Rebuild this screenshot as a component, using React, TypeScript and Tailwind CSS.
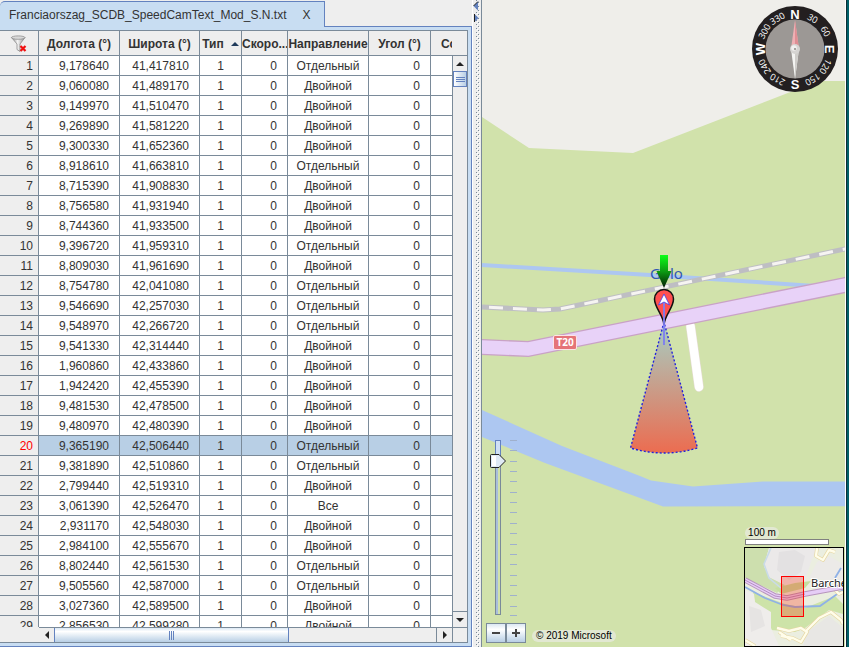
import React, { useState } from "react";

type Row = [string, string, string];

const DATA: Row[] = [
  ["9,178640", "41,417810", "Отдельный"],
  ["9,060080", "41,489170", "Двойной"],
  ["9,149970", "41,510470", "Двойной"],
  ["9,269890", "41,581220", "Двойной"],
  ["9,300330", "41,652360", "Двойной"],
  ["8,918610", "41,663810", "Отдельный"],
  ["8,715390", "41,908830", "Двойной"],
  ["8,756580", "41,931940", "Двойной"],
  ["8,744360", "41,933500", "Двойной"],
  ["9,396720", "41,959310", "Отдельный"],
  ["8,809030", "41,961690", "Двойной"],
  ["8,754780", "42,041080", "Отдельный"],
  ["9,546690", "42,257030", "Отдельный"],
  ["9,548970", "42,266720", "Отдельный"],
  ["9,541330", "42,314440", "Двойной"],
  ["1,960860", "42,433860", "Двойной"],
  ["1,942420", "42,455390", "Двойной"],
  ["9,481530", "42,478500", "Двойной"],
  ["9,480970", "42,480390", "Двойной"],
  ["9,365190", "42,506440", "Отдельный"],
  ["9,381890", "42,510860", "Отдельный"],
  ["2,799440", "42,519310", "Двойной"],
  ["3,061390", "42,526470", "Все"],
  ["2,931170", "42,548030", "Двойной"],
  ["2,984100", "42,555670", "Двойной"],
  ["8,802440", "42,561530", "Отдельный"],
  ["9,505560", "42,587000", "Отдельный"],
  ["3,027360", "42,589500", "Двойной"],
  ["2,856530", "42,599280", "Двойной"],
];

const TH = "border-r border-b border-[#7a8a99] p-0 pt-px text-center font-bold overflow-hidden whitespace-nowrap";
const TD = "border-r border-b border-[#7a8a99] p-0";

function FilterIcon() {
  return (
    <svg width="18" height="18" viewBox="0 0 18 18" aria-hidden="true">
      <defs>
        <linearGradient id="funnel" x1="0" x2="1">
          <stop offset="0" stopColor="#8a8a8a" />
          <stop offset=".45" stopColor="#f4f4f4" />
          <stop offset="1" stopColor="#8f8f8f" />
        </linearGradient>
      </defs>
      <path d="M1.5 2.5 L7 9 V14.5 L10 16.5 V9 L15 2.5Z" fill="url(#funnel)" stroke="#8a8a8a" strokeWidth=".8" />
      <ellipse cx="8.2" cy="2.6" rx="6.8" ry="1.7" fill="#d9d9d9" stroke="#8f8f8f" strokeWidth=".8" />
      <path d="M10.5 11 L15.5 16 M15.5 11 L10.5 16" stroke="#f01010" strokeWidth="2.2" />
    </svg>
  );
}

function DataTable() {
  const [selected, setSelected] = useState(19);
  return (
    <table className="w-[490px] table-fixed border-separate border-spacing-0 text-[12px] leading-4 text-[#333]">
      <colgroup>
        <col className="w-[39px]" />
        <col className="w-[81px]" />
        <col className="w-[80px]" />
        <col className="w-[42px]" />
        <col className="w-[46px]" />
        <col className="w-[81px]" />
        <col className="w-[62px]" />
        <col />
      </colgroup>
      <thead>
        <tr className="h-[25px] bg-[#eee]">
          <th className={TH}>
            <button aria-label="Сбросить фильтр" className="flex h-[23px] w-full items-center justify-center">
              <FilterIcon />
            </button>
          </th>
          <th className={TH}>Долгота (°)</th>
          <th className={TH}>Широта (°)</th>
          <th className={TH}>
            <span className="flex items-center justify-center gap-[7px]">
              Тип
              <svg width="8" height="4" viewBox="0 0 8 4" aria-hidden="true">
                <path d="M0 4 L4 0 L8 4Z" fill="#1f3a5a" />
              </svg>
            </span>
          </th>
          <th className={TH}>Скоро...</th>
          <th className={TH}>Направление</th>
          <th className={TH}>Угол (°)</th>
          <th className="overflow-hidden border-b border-[#7a8a99] p-0 pt-px pl-[10px] text-left font-bold">Сс</th>
        </tr>
      </thead>
      <tbody>
        {DATA.map(([lon, lat, dir], i) => (
          <tr key={lat} onClick={() => setSelected(i)} className={i === selected ? "h-5 bg-[#b8cfe5]" : "h-5 bg-white"}>
            <th
              scope="row"
              className={`${TD} bg-[#eee] pr-[5px] text-right font-normal ${i === selected ? "text-[#ff0000]" : ""}`}
            >
              {i + 1}
            </th>
            <td className={`${TD} pr-[10px] text-right`}>{lon}</td>
            <td className={`${TD} pr-[10px] text-right`}>{lat}</td>
            <td className={`${TD} text-center`}>1</td>
            <td className={`${TD} pr-[10px] text-right`}>0</td>
            <td className={`${TD} text-center`}>{dir}</td>
            <td className={`${TD} pr-[10px] text-right`}>0</td>
            <td className={TD}></td>
          </tr>
        ))}
      </tbody>
    </table>
  );
}

function Arrow({ d }: { d: string }) {
  return (
    <svg width="8" height="8" viewBox="0 0 8 8" aria-hidden="true">
      <path d={d} fill="#222" />
    </svg>
  );
}

function VerticalScroll() {
  return (
    <div className="flex w-[15px] shrink-0 flex-col bg-[#eee]">
      <div className="h-[25px] border-b border-[#7a8a99]" />
      <div className="flex flex-1 flex-col border-l border-[#7a8a99]">
        <button aria-label="Вверх" className="flex h-[15px] items-center justify-center">
          <Arrow d="M0 6 L4 2 L8 6Z" />
        </button>
        <div className="flex h-4 flex-col items-center justify-center gap-px border border-[#6382bf] bg-linear-to-r from-white to-[#b8cfe5]">
          <i className="h-px w-[9px] bg-[#6382bf]" />
          <i className="h-px w-[9px] bg-[#6382bf]" />
          <i className="h-px w-[9px] bg-[#6382bf]" />
        </div>
        <div className="flex-1" />
        <button aria-label="Вниз" className="flex h-4 items-center justify-center border-t border-[#7a8a99]">
          <Arrow d="M0 2 L4 6 L8 2Z" />
        </button>
      </div>
    </div>
  );
}

function HorizontalScroll() {
  return (
    <div className="flex h-[15px] shrink-0 bg-[#eee]">
      <div className="w-[39px]" />
      <div className="flex flex-1 border-t border-[#7a8a99]">
        <button aria-label="Влево" className="flex w-[15px] items-center justify-center">
          <Arrow d="M6 0 L2 4 L6 8Z" />
        </button>
        <div className="flex w-[235px] items-center justify-center gap-px border-x border-[#6382bf] bg-linear-to-b from-[#dce8f4] via-white via-25% to-[#b8cfe5]">
          <i className="h-[9px] w-px bg-[#6382bf]" />
          <i className="h-[9px] w-px bg-[#6382bf]" />
          <i className="h-[9px] w-px bg-[#6382bf]" />
        </div>
        <div className="flex-1" />
        <button aria-label="Вправо" className="flex w-4 items-center justify-center border-l border-[#7a8a99]">
          <Arrow d="M2 0 L6 4 L2 8Z" />
        </button>
        <div className="w-[15px] border-l border-[#7a8a99]" />
      </div>
    </div>
  );
}

function FilePane() {
  return (
    <section className="flex w-[472px] shrink-0 flex-col bg-[#eee]">
      <div className="flex h-[27px] shrink-0 items-stretch pt-px">
        <div className="flex w-[325px] items-center rounded-tl-[5px] border-t border-r border-[#6382bf] bg-[#c8ddf2] pl-[9px] text-[12px] leading-4 text-[#333]">
          <span className="whitespace-nowrap">Franciaorszag_SCDB_SpeedCamText_Mod_S.N.txt</span>
          <button aria-label="Закрыть вкладку" className="ml-4">
            X
          </button>
        </div>
        <div className="flex-1 border-b border-[#6382bf]" />
      </div>
      <div className="flex min-h-0 flex-1 flex-col border-r border-b border-[#6382bf] bg-[#c8ddf2] pt-[3px] pr-[3px] pb-[3px]">
        <div className="flex min-h-0 flex-1 flex-col border-t border-r border-b border-[#7a8a99] bg-[#eee]">
          <div className="flex min-h-0 flex-1">
            <div className="min-w-0 flex-1 overflow-hidden">
              <DataTable />
            </div>
            <VerticalScroll />
          </div>
          <HorizontalScroll />
        </div>
      </div>
    </section>
  );
}

function Splitter() {
  return (
    <div className="w-[9px] shrink-0 bg-[#eee]">
      <svg width="9" height="100%" className="block" aria-hidden="true">
        <defs>
          <pattern id="grip" width="4" height="4" patternUnits="userSpaceOnUse">
            <rect x="0" y="0" width="1" height="1" fill="#7a8a99" />
            <rect x="2" y="2" width="1" height="1" fill="#7a8a99" />
            <rect x="1" y="1" width="1" height="1" fill="#fff" />
            <rect x="3" y="3" width="1" height="1" fill="#fff" />
          </pattern>
        </defs>
        <rect width="1" height="100%" fill="#fff" />
        <rect x="4" y="0" width="4" height="100%" fill="url(#grip)" />
        <path d="M6 1.5 L1.5 6 L6 10.5Z" fill="#6382bf" />
        <path d="M6 1.5 L1.5 6" stroke="#222" fill="none" />
        <path d="M2.5 14 L6.5 18 L2.5 22Z" fill="#6382bf" />
        <path d="M2.5 14 V22" stroke="#222" />
      </svg>
    </div>
  );
}

const ROAD = "470,347 482,347 528,349 845,285 1400,173";
const RAIL = "482,307 543,310 560,309 845,249 1400,132";

function MapDrawing() {
  return (
    <svg
      className="absolute inset-0 h-full w-full"
      viewBox="482 0 363 647"
      preserveAspectRatio="xMinYMin slice"
      role="img"
      aria-label="Карта"
    >
      <defs>
        <linearGradient id="cone" x1="0" y1="0" x2="0" y2="1">
          <stop offset="0" stopColor="#a5cfc4" />
          <stop offset="1" stopColor="#ec6c50" />
        </linearGradient>
        <linearGradient id="green" x1="0" y1="0" x2="0" y2="1">
          <stop offset="0" stopColor="#0cff18" />
          <stop offset=".5" stopColor="#0b9a12" />
          <stop offset="1" stopColor="#041a04" />
        </linearGradient>
      </defs>
      <rect x="482" width="1000" height="1000" fill="#d1e2ab" />
      <path d="M482 0 V117 L529 148 L633 153 L793 91 L823 81 H1400 V0Z" fill="#efeeea" />
      <path
        d="M482 410 L562 446 L640 476 L651 480.5 L693 486.5 L763 481.5 L1400 481 V505 L663 506.5 L545 463 L482 437Z"
        fill="#adc7f1"
      />
      <path d="M482 265 L650 275 L770 283 L815 286" stroke="#adc7f1" strokeWidth="4" fill="none" />
      <polyline points={RAIL} stroke="#bebec3" strokeWidth="5" fill="none" />
      <polyline points={RAIL} stroke="#f6f4f2" strokeWidth="3" fill="none" strokeDasharray="14 10" strokeDashoffset="-7" />
      <text x="650" y="279" fontSize="15" fill="#3057b4" className="font-['Noto_Sans',sans-serif]">
        Golo
      </text>
      <path d="M690.5 326 L699 387" stroke="#e6dcd6" strokeWidth="9.5" strokeLinecap="round" />
      <path d="M690.5 326 L699 387" stroke="#fff" strokeWidth="8.5" strokeLinecap="round" />
      <polyline points={ROAD} stroke="#c9a2c6" strokeWidth="16" fill="none" />
      <polyline points={ROAD} stroke="#e8d2f8" strokeWidth="13.4" fill="none" />
      <rect x="553.5" y="335.5" width="23" height="14" rx="1.5" fill="#e57478" stroke="#fbe4e6" />
      <text x="565" y="346" fontSize="10" fontWeight="bold" fill="#fff" textAnchor="middle" className="font-['Noto_Sans',sans-serif]">
        T20
      </text>
      <path
        d="M664 322 L630.5 448 Q664 458 697.5 448Z"
        fill="url(#cone)"
        stroke="#2222dd"
        strokeWidth="1.4"
        strokeDasharray="2 2"
      />
      <path
        d="M664 325 C663.5 315 654.5 308 654.5 299 A9.3 9.3 0 0 1 673.5 299 C673.5 308 664.5 315 664 325Z"
        fill="#ff5050"
        stroke="#111"
        strokeWidth="1.5"
      />
      <path d="M664 302 V345" stroke="#7d7df2" strokeWidth="1.8" />
      <path d="M664 294 L669.5 305 L664 302 L658.5 305Z" fill="#fff" stroke="#3d3df0" strokeWidth=".8" />
      <path d="M660 255 H668 V271 H671.5 L664 288 L656.5 271 H660Z" fill="url(#green)" />
    </svg>
  );
}

const DEGREES = [30, 60, 120, 150, 210, 240, 300, 330];

function Compass() {
  return (
    <svg width="86" height="86" viewBox="-43 -43 86 86" className="absolute top-1.5 right-[7px]" role="img" aria-label="Компас">
      <circle r="43" fill="#231f20" />
      <circle r="29.5" fill="#9c9895" />
      <g fill="#fff" textAnchor="middle" className="font-['Open_Sans',sans-serif]">
        {DEGREES.map((a) => (
          <text key={a} y="-32" fontSize="9" fontWeight="500" transform={`rotate(${a})`}>
            {a}
          </text>
        ))}
        <g fontSize="13" fontWeight="bold" className="font-['Liberation_Sans',sans-serif]">
          <text y="-30">N</text>
          <text y="-30" transform="rotate(90)">E</text>
          <text y="39.5">S</text>
          <text y="-30" transform="rotate(-90)">W</text>
        </g>
      </g>
      <path d="M0 -29 L4 0 H-4Z" fill="#eeb0b4" />
      <path d="M0 -29 L4 0 H0Z" fill="#df8e94" />
      <path d="M0 30 L4 0 H-4Z" fill="#f4f4f2" />
      <path d="M0 30 L4 0 H0Z" fill="#cfcdca" />
      <circle r="5" fill="#d6d4d2" />
      <circle cx="-1" cy="-1" r="2.8" fill="#f1f0ef" />
      <circle r="1" fill="#8b8885" />
    </svg>
  );
}

const TICKS = [0, 10, 21, 31, 41, 52, 62, 72, 83, 93, 104, 114, 124, 135, 145, 155, 166, 175];

function ZoomControl() {
  const [zoom, setZoom] = useState(16);
  const button =
    "flex size-5 items-center justify-center border border-[#7a8a99] bg-linear-to-b from-[#dce8f3] via-white via-30% to-[#b8cfe5]";
  return (
    <div className="absolute bottom-1 left-1 w-10">
      <div className="relative mb-[7px] h-[177px]">
        <svg width="40" height="177" viewBox="0 0 40 177" className="block" aria-hidden="true">
          <rect x="9.5" y="1.5" width="5" height="174" fill="#d1e2ab" stroke="#7a8a99" />
          <rect x="10" y="2" width="2" height="173" fill="#a9bedb" />
          <rect x="9.5" y="1.5" width="5" height="20" fill="#cfe0f5" stroke="#6382bf" />
          {TICKS.map((t) => (
            <path key={t} d={`M24 ${t + 1.5} h7`} stroke="#9fb0cc" />
          ))}
          <path d="M5.5 15.5 H13 L19.5 22 L13 28.5 H5.5 Q4.5 28.5 4.5 27.5 V16.5 Q4.5 15.5 5.5 15.5Z" fill="#dfeaf5" stroke="#222" />
          <path d="M6 17 H10 V27 H6Z" fill="#fff" />
        </svg>
        <input
          type="range"
          min="1"
          max="18"
          value={zoom}
          onChange={(e) => setZoom(Number(e.target.value))}
          aria-label="Масштаб"
          className="absolute inset-y-0 left-1 w-4 cursor-pointer opacity-0 [direction:rtl] [writing-mode:vertical-lr]"
        />
      </div>
      <div className="flex">
        <button aria-label="Уменьшить" className={button} onClick={() => setZoom(zoom - 1)}>
          <svg width="10" height="10" viewBox="0 0 10 10">
            <path d="M1 5 H9" stroke="#444" strokeWidth="2" />
          </svg>
        </button>
        <button aria-label="Увеличить" className={button} onClick={() => setZoom(zoom + 1)}>
          <svg width="10" height="10" viewBox="0 0 10 10">
            <path d="M1 5 H9 M5 1 V9" stroke="#444" strokeWidth="2" />
          </svg>
        </button>
      </div>
    </div>
  );
}

const LANES =
  "M72 0 L71 8 L78 12 L84 2 L90 4 M88 40 L94 46 L98 44 M32 80 L44 83 L56 80 L62 84 L56 94 L48 90 L36 88 M60 84 L74 70 L86 64 L96 72 L98 76 M34 84 L46 92 M0 92 L10 98";

function Overview() {
  return (
    <div className="absolute right-px bottom-0 w-[100px]">
      <div className="ml-px w-[34px] rounded-full bg-[#e2e8d2] text-center text-[10px] leading-3 text-black">100 m</div>
      <div className="ml-px mb-0.5 h-1.5 w-[84px] border border-[#808080] bg-white" />
      <div className="border border-black">
        <svg width="98" height="98" viewBox="0 0 98 98" className="block" role="img" aria-label="Обзорная карта">
          <rect width="98" height="98" fill="#ebeee0" />
          <path d="M0 0 H24 L19 18 L24 29 L40 37 L32 45 L0 30Z" fill="#cddfae" />
          <path d="M24 0 H72 L66 14 L60 32 L40 37 L24 29 L19 18Z" fill="#ebe9e9" />
          <path d="M34 4 L50 2 L60 8 L56 24 L44 32 L32 22Z" fill="#e3e1e2" />
          <path d="M72 14 L84 8 L98 16 V34 L64 30Z" fill="#eceae8" />
          <path d="M30 40 L50 35 L66 33 L60 40 L36 46Z" fill="#c5dfa0" />
          <path d="M8 44 L40 56 L60 60 L90 48 L98 56 V66 L84 62 L60 80 L50 84 L26 82 L24 66 L10 56Z" fill="#cde3a8" />
          <path d="M0 42 L9 46 L10 54 L26 64 L26 80 L34 98 H0Z" fill="#efedeb" />
          <path d="M4 58 L16 62 L20 78 L6 84Z" fill="#e6e4e3" />
          <path d="M62 84 L84 68 L98 80 V98 H58Z" fill="#e8e7e4" />
          <path d="M26 0 L19 16 L24 30 L36 40" fill="none" stroke="#c9dbe8" strokeWidth="1.6" />
          <path d="M0 39 L20 50 L38 57 L50 59 L75 58 L98 42 M90 30 L96 20" fill="none" stroke="#8fb1e6" strokeWidth="1.8" />
          <g fill="none" strokeLinejoin="round">
            <path d={LANES} stroke="#e6d6a2" strokeWidth="3.6" />
            <path d={LANES} stroke="#fffdea" strokeWidth="2.4" />
            <path d="M0 32 L30 48 L42 50 L60 46 L98 39" stroke="#b795bd" strokeWidth="5.4" />
            <path d="M0 32 L30 48 L42 50 L60 46 L98 39" stroke="#e6cdf6" strokeWidth="3.6" />
            <path d="M0 32 L30 48 L42 50 L60 46" stroke="#b48cc0" strokeWidth="1" />
          </g>
          <text x="66" y="39" fontSize="11" fill="#222" stroke="#fff" strokeWidth="2" paintOrder="stroke" className="font-['Noto_Sans',sans-serif]">
            Barche
          </text>
          <rect x="36.5" y="28.5" width="22" height="40" fill="#ff2000" fillOpacity=".27" stroke="#ff0000" />
        </svg>
      </div>
    </div>
  );
}

export default function App() {
  return (
    <main className="flex h-screen w-full overflow-hidden bg-[#eee] font-['Liberation_Sans',Arial,sans-serif]">
      <FilePane />
      <Splitter />
      <section className="relative min-w-0 flex-1 overflow-hidden border-l border-[#7a8a99]">
        <MapDrawing />
        <Compass />
        <ZoomControl />
        <div className="absolute bottom-[5px] left-[50px] rounded-full bg-[#e2e8d2] px-1 text-[10px] leading-3 whitespace-nowrap text-black">
          © 2019 Microsoft
        </div>
        <Overview />
      </section>
      <div className="w-1 shrink-0 border-l border-white bg-[#006068]">
        <div className="h-full w-px bg-[#0b2f35]" />
      </div>
    </main>
  );
}
